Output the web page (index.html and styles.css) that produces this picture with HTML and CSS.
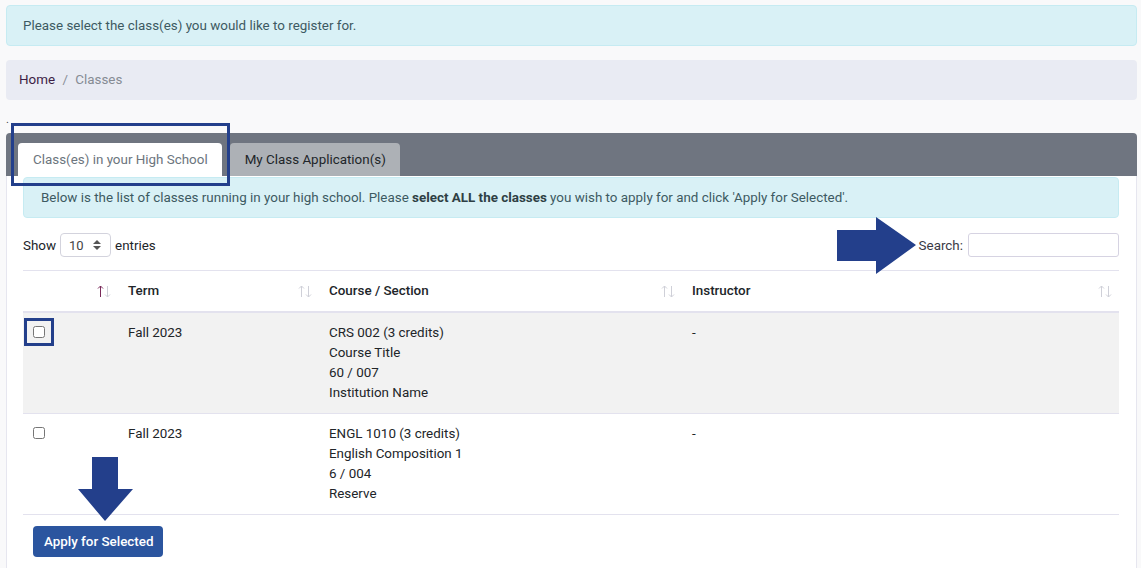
FILE: index.html
```html
<!DOCTYPE html>
<html lang="en">
<head>
  <meta charset="UTF-8" />
  <title>Classes</title>
  <link rel="stylesheet" href="styles.css">
</head>
<body>

  <div class="page">
    <div class="alert">Please select the class(es) you would like to register for.</div>

    <nav class="breadcrumb">
      <a href="#">Home</a>
      <span class="sep">/</span>
      <span class="current">Classes</span>
    </nav>

    <div class="stray">.</div>

    <div class="card">
      <div class="card-header">
        <a class="tab active" href="#">Class(es) in your High School</a>
        <a class="tab" href="#">My Class Application(s)</a>
      </div>

      <div class="card-body">
        <div class="alert">Below is the list of classes running in your high school. Please <b>select ALL the classes</b> you wish to apply for and click 'Apply for Selected'.</div>

        <div class="table-tools">
          <label class="length">Show
            <span class="fake-select">10
              <svg width="8" height="10" viewBox="0 0 8 10"><path d="M4 0 L8 4 H0 Z M0 6 H8 L4 10 Z" fill="#555"/></svg>
            </span>
            entries</label>
          <label class="search">Search: <input type="text"></label>
        </div>

        <table class="classes">
          <colgroup>
            <col style="width:95px">
            <col style="width:201px">
            <col style="width:363px">
            <col>
          </colgroup>
          <thead>
            <tr>
              <th><svg class="sort" width="14" height="13" viewBox="0 0 14 13"><path d="M3.5 12 V1 M1 3.5 L3.5 1 L6 3.5" stroke="#7a2a5a" fill="none"/><path d="M10.5 1 V12 M8 9.5 L10.5 12 L13 9.5" stroke="#cfd0d8" fill="none"/></svg></th>
              <th>Term<svg class="sort" width="14" height="13" viewBox="0 0 14 13"><path d="M3.5 12 V1 M1 3.5 L3.5 1 L6 3.5" stroke="#cfd0d8" fill="none"/><path d="M10.5 1 V12 M8 9.5 L10.5 12 L13 9.5" stroke="#cfd0d8" fill="none"/></svg></th>
              <th>Course / Section<svg class="sort" width="14" height="13" viewBox="0 0 14 13"><path d="M3.5 12 V1 M1 3.5 L3.5 1 L6 3.5" stroke="#cfd0d8" fill="none"/><path d="M10.5 1 V12 M8 9.5 L10.5 12 L13 9.5" stroke="#cfd0d8" fill="none"/></svg></th>
              <th>Instructor<svg class="sort" width="14" height="13" viewBox="0 0 14 13"><path d="M3.5 12 V1 M1 3.5 L3.5 1 L6 3.5" stroke="#cfd0d8" fill="none"/><path d="M10.5 1 V12 M8 9.5 L10.5 12 L13 9.5" stroke="#cfd0d8" fill="none"/></svg></th>
            </tr>
          </thead>
          <tbody>
            <tr class="odd">
              <td><input type="checkbox"></td>
              <td>Fall 2023</td>
              <td>CRS 002 (3 credits)<br>Course Title<br>60 / 007<br>Institution Name</td>
              <td>-</td>
            </tr>
            <tr>
              <td><input type="checkbox"></td>
              <td>Fall 2023</td>
              <td>ENGL 1010 (3 credits)<br>English Composition 1<br>6 / 004<br>Reserve</td>
              <td>-</td>
            </tr>
          </tbody>
        </table>

        <button class="apply-btn">Apply for Selected</button>
      </div>
    </div>
  </div>

  <!-- annotations drawn over the screenshot -->
  <div class="mark mark-tab"></div>
  <div class="mark mark-check"></div>
  <svg class="arrow arrow-right" width="80" height="58" viewBox="0 0 80 58">
    <polygon points="0,13 39,13 39,0 79,28 39,57 39,44 0,44" fill="#233f8b"/>
  </svg>
  <svg class="arrow arrow-down" width="56" height="65" viewBox="0 0 56 65">
    <polygon points="14,0 40,0 40,32 55,32 27,64 0,32 14,32" fill="#233f8b"/>
  </svg>

</body>
</html>
```

FILE: styles.css
```css
body {
  margin: 0;
  background-color: #f9f9fa;
  font-family: Roboto, "Liberation Sans", Arial, sans-serif;
  font-size: 13.4px;
  color: #212529;
  position: relative;
  height: 568px;
  overflow: hidden;
}

.page {
  padding: 5px 4px 0 6px;
}

.alert {
  background-color: #d9f1f6;
  border: 1px solid #c6ebf2;
  border-radius: 4px;
  color: #3d5a62;
  padding: 9px 16px;
  line-height: 21px;
}

.alert b {
  color: #2e3f44;
  font-weight: 700;
}

.breadcrumb {
  margin-top: 14px;
  background-color: #e9ebf3;
  border-radius: 4px;
  padding: 10px 13px;
  line-height: 20px;
}

.breadcrumb a {
  color: #3c1d45;
  text-decoration: none;
}

.breadcrumb .sep {
  color: #8b8f98;
  margin: 0 4px;
}

.breadcrumb .current {
  color: #868b94;
}

.stray {
  height: 33px;
  line-height: 12px;
  padding-top: 14px;
  box-sizing: border-box;
  font-size: 11px;
  color: #444;
}

.card {
  background-color: #fff;
  border-radius: 4px 4px 0 0;
  overflow: hidden;
}

.card-header {
  background-color: #6f7580;
  padding: 10px 12px 0 12px;
  display: flex;
  gap: 8px;
}

.tab {
  display: block;
  padding: 6px 14px 6px 15px;
  line-height: 21px;
  border-radius: 4px 4px 0 0;
  background-color: #adb1b6;
  color: #212529;
  text-decoration: none;
}

.tab.active {
  background-color: #fff;
  color: #6c757d;
}

.card-body {
  border-left: 1px solid #e6e6ef;
  border-right: 1px solid #e6e6ef;
  padding: 1px 17px 20px 16px;
}

.card-body .alert {
  padding-left: 17px;
}

.table-tools {
  display: flex;
  justify-content: space-between;
  align-items: center;
  margin-top: 15px;
  height: 24px;
  margin-bottom: 13px;
}

.length {
  display: flex;
  align-items: center;
  gap: 4px;
}

.fake-select {
  display: inline-flex;
  align-items: center;
  justify-content: space-between;
  box-sizing: border-box;
  width: 51px;
  height: 24px;
  padding: 0 9px 0 8px;
  border: 1px solid #d3d3dd;
  border-radius: 4px;
  background-color: #fff;
  font-size: 13px;
  color: #444;
}

.search {
  display: flex;
  align-items: center;
  gap: 5px;
  color: #3a3a45;
}

.search input {
  box-sizing: border-box;
  width: 151px;
  height: 24px;
  border: 1px solid #d6d3e2;
  border-radius: 3px;
  margin: 0;
}

.classes {
  width: 100%;
  border-collapse: collapse;
  table-layout: fixed;
  border-top: 1px solid #e3e2ee;
}

.classes th {
  text-align: left;
  font-weight: 500;
  padding: 10px 10px;
  line-height: 20px;
  border-bottom: 2px solid #e3e2ee;
  position: relative;
}

.classes td {
  padding: 10px 10px;
  line-height: 20px;
  vertical-align: top;
  border-bottom: 1px solid #e3e2ee;
}

.classes tr.odd td {
  background-color: #f2f2f2;
}

.classes td input {
  margin: 3px 0 0 0;
  width: 12px;
  height: 12px;
}

.sort {
  position: absolute;
  right: 7px;
  top: 14px;
}

.apply-btn {
  margin: 11px 0 0 10px;
  background-color: #2b559f;
  color: #fff;
  border: none;
  border-radius: 4px;
  font-family: inherit;
  font-size: 13.4px;
  font-weight: 500;
  padding: 0 11px;
  height: 31px;
  width: 130px;
  white-space: nowrap;
}

.mark {
  position: absolute;
  border: 3px solid #233f8b;
  box-sizing: border-box;
}

.mark-tab {
  left: 11px;
  top: 123px;
  width: 219px;
  height: 63px;
}

.mark-check {
  left: 24px;
  top: 318px;
  width: 30px;
  height: 28px;
}

.arrow {
  position: absolute;
}

.arrow-right {
  left: 837px;
  top: 217px;
}

.arrow-down {
  left: 78px;
  top: 457px;
}
```
